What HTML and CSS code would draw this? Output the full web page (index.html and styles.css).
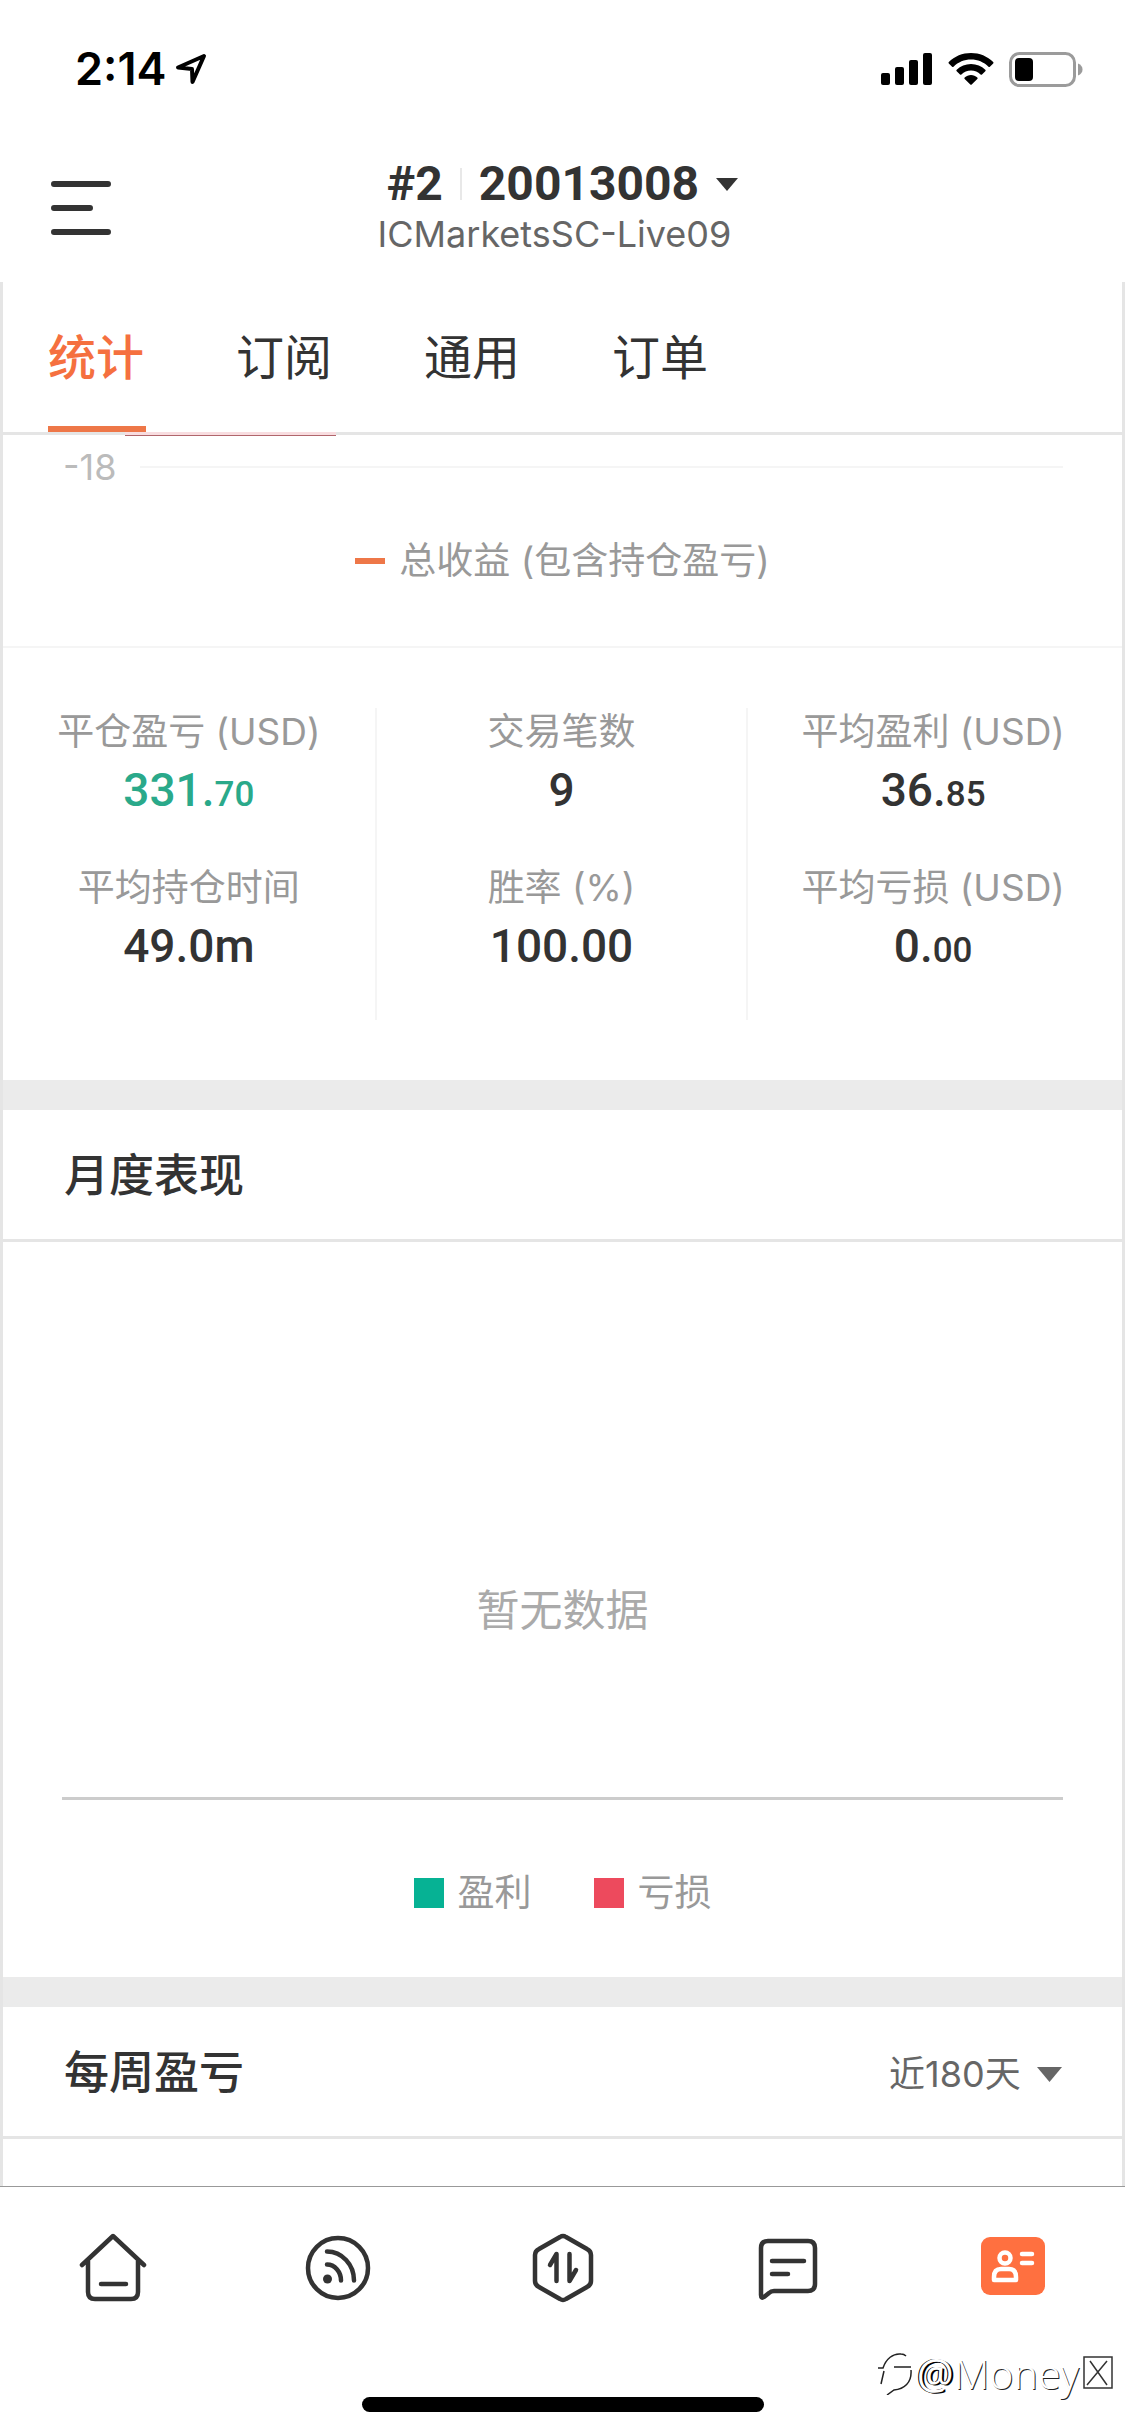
FILE: index.html
```html
<!DOCTYPE html>
<html lang="zh-CN">
<head>
<meta charset="utf-8">
<meta name="viewport" content="width=device-width, initial-scale=1">
<title>20013008</title>
<link rel="stylesheet" href="styles.css">
</head>
<body>
<div class="app">
  <div class="status">
    <div class="status-left">
      <span class="time">2:14</span>
      <svg width="34" height="34" viewBox="0 0 34 34" fill="none" stroke="#000" stroke-width="4" stroke-linejoin="round"><path d="M30 4 4 15.500l14 1.500L18.500 30z"/></svg>
    </div>
    <div class="status-right">
      <svg width="52" height="34" viewBox="0 0 52 34"><rect y="21" width="9" height="12" rx="2"/><rect x="14" y="15" width="9" height="18" rx="2"/><rect x="28" y="8" width="9" height="25" rx="2"/><rect x="42" y="1" width="9" height="32" rx="2"/></svg>
      <svg width="46" height="34" viewBox="0 0 46 34"><path d="M23 1C14.500 1 6.500 4.300.8 10a1 1 0 0 0 0 1.400l3.300 3.300a1 1 0 0 0 1.400 0C10.200 10.200 16.300 7.600 23 7.600s12.800 2.600 17.500 7.100a1 1 0 0 0 1.400 0l3.300-3.300a1 1 0 0 0 0-1.400C39.500 4.300 31.500 1 23 1z"/><path d="M23 12c-5.500 0-10.500 2.100-14.300 5.700a1 1 0 0 0 0 1.500l3.300 3.200a1 1 0 0 0 1.400 0C16 20 19.300 18.600 23 18.600s7 1.400 9.600 3.800a1 1 0 0 0 1.400 0l3.300-3.200a1 1 0 0 0 0-1.500C33.500 14.100 28.500 12 23 12z"/><path d="M23 23c-2.400 0-4.600.9-6.300 2.400a1 1 0 0 0 0 1.500l5.600 5.600a1 1 0 0 0 1.400 0l5.600-5.600a1 1 0 0 0 0-1.500C27.600 23.900 25.400 23 23 23z"/></svg>
      <svg width="74" height="36" viewBox="0 0 74 36"><rect x="1.500" y="2.500" width="64" height="32" rx="9" fill="none" stroke="#9b9b9b" stroke-width="3"/><rect x="6" y="7" width="18" height="23" rx="4"/><path d="M69 12.500c3 1.200 4.500 3.300 4.500 6s-1.500 4.800-4.500 6z" fill="#9b9b9b"/></svg>
    </div>
  </div>

  <header class="header">
    <button class="menu" type="button" aria-label="菜单"><svg width="60" height="56" viewBox="0 0 60 56" stroke="#333" stroke-width="6" stroke-linecap="round"><path d="M3 4h54M3 28h36M3 52h54"/></svg></button>
    <button class="account" type="button">
      <span class="account-line"><span>#2</span><i class="bar"></i><span>20013008</span><svg width="22" height="13" viewBox="0 0 22 13"><path d="M0 0h22L11 13z" fill="#333"/></svg></span>
      <span class="server">ICMarketsSC-Live09</span>
    </button>
  </header>

  <main class="content">
    <nav class="tabs">
      <a class="tab active" href="#stats">统计</a>
      <a class="tab" href="#subscribe">订阅</a>
      <a class="tab" href="#general">通用</a>
      <a class="tab" href="#orders">订单</a>
    </nav>

    <section class="chart-end" id="stats">
      <div class="area-edge"></div>
      <div class="axis"><span>-18</span><i></i></div>
      <div class="legend"><i class="dash"></i>总收益 (包含持仓盈亏)</div>
    </section>

    <section class="stats">
      <div class="col">
        <div class="stat"><span class="label">平仓盈亏 (USD)</span><span class="value gain">331.<small>70</small></span></div>
        <div class="stat"><span class="label">平均持仓时间</span><span class="value">49.0m</span></div>
      </div>
      <div class="col">
        <div class="stat"><span class="label">交易笔数</span><span class="value">9</span></div>
        <div class="stat"><span class="label">胜率 (%)</span><span class="value">100.00</span></div>
      </div>
      <div class="col">
        <div class="stat"><span class="label">平均盈利 (USD)</span><span class="value">36.<small>85</small></span></div>
        <div class="stat"><span class="label">平均亏损 (USD)</span><span class="value">0.<small>00</small></span></div>
      </div>
    </section>

    <section class="panel">
      <div class="panel-head"><h2>月度表现</h2></div>
      <div class="monthly">
        <p class="empty">暂无数据</p>
        <div class="legend keys"><span><i class="key win"></i>盈利</span><span><i class="key loss"></i>亏损</span></div>
      </div>
    </section>

    <section class="panel">
      <div class="panel-head">
        <h2>每周盈亏</h2>
        <label class="range"><select aria-label="时间范围"><option>近180天</option></select><svg width="25" height="15" viewBox="0 0 25 15"><path d="M0 0h25L12.500 15z" fill="#666"/></svg></label>
      </div>
    </section>
  </main>

  <footer class="footer">
    <nav class="dock">
      <a href="#home" aria-label="首页"><svg viewBox="0 0 72 72"><path d="M5 33 36 4l31 29M11 29v31q0 7 7 7h36q7 0 7-7V29M24 52h25"/></svg></a>
      <a href="#feed" aria-label="动态"><svg viewBox="0 0 72 72"><circle cx="36" cy="36" r="30"/><path d="M25 19.500a27 29 0 0 1 27 29M25 32.500a14 16 0 0 1 14 16"/><circle cx="25.500" cy="47" r="4.500" class="solid"/></svg></a>
      <a href="#trade" aria-label="交易"><svg viewBox="0 0 72 72"><path d="M33 5q3-2 6 0l21 12q4 2 4 6v26q0 4-4 6L39 67q-3 2-6 0L12 55q-4-2-4-6V23q0-4 4-6z"/><path d="M23 33l6.500-11v27M42.500 22v27L49 38"/></svg></a>
      <a href="#messages" aria-label="消息"><svg viewBox="0 0 72 72"><path d="M9 63V16q0-7 7-7h40q7 0 7 7v36q0 7-7 7H22q-3 0-5 2l-5 4q-3 2-3-2zM20 29h32M20 42h16"/></svg></a>
      <a href="#account" aria-label="账户"><svg viewBox="0 0 72 72"><rect x="4" y="5" width="64" height="58" rx="9" class="tile"/><g class="person"><circle cx="28" cy="26" r="5.500"/><path d="M17 48v-3q0-8 7-8h8q7 0 7 8v3zM45 22h10M45 31h10"/></g></svg></a>
    </nav>
    <div class="home-bar"></div>
    <div class="watermark"><svg width="36" height="44" viewBox="0 0 36 44" fill="none" stroke="#222" stroke-width="1.500"><path d="M1 17h5C9 8 16 2 24 3c2 0 4 1 5 2M4 33l3-13M17 16h17M34 19c1 13-7 19-17 20l-7 5"/></svg><span><b>@</b>Money</span><svg width="30" height="34" viewBox="0 0 30 34" fill="none" stroke="#333" stroke-width="1.500"><path d="M1 1h28v31H1z"/><path d="M4 29 24 5M7 5l17 24"/></svg></div>
  </footer>
</div>
</body>
</html>
```
FILE: styles.css
```css
* { box-sizing: border-box; }

body {
  margin: 0;
  background: #fff;
  color: #333;
  font-family: Inter, "Noto Sans CJK SC", sans-serif;
  font-size: 36px;
}

button, select {
  padding: 0;
  border: 0;
  background: none;
  color: inherit;
  font: inherit;
  appearance: none;
}

a { color: inherit; text-decoration: none; }
i { display: block; flex: none; }
svg { display: block; flex: none; }

.app { display: flex; flex-direction: column; min-height: 100vh; }

/* Status bar */
.status {
  display: flex;
  justify-content: space-between;
  align-items: center;
  height: 138px;
  padding: 0 42px 0 75px;
  color: #000;
}
.status-left { display: flex; align-items: center; gap: 8px; }
.time { font-size: 45px; font-weight: 600; line-height: 52px; }
.status-right { display: flex; align-items: center; gap: 15px; }

/* Account header */
.header {
  display: grid;
  grid-template-columns: 1fr auto 1fr;
  align-items: center;
  height: 144px;
  padding: 0 51px 4px;
}
.menu { justify-self: start; }
.account { display: flex; flex-direction: column; align-items: center; }
.account-line {
  display: flex;
  align-items: center;
  gap: 17px;
  font: 700 48px/52px Roboto, sans-serif;
}
.bar { width: 2px; height: 32px; background: #e8e8e8; }
.server { padding-right: 16px; color: #666; line-height: 48px; }

/* Scrolled content */
.content {
  flex: 1;
  display: flex;
  flex-direction: column;
  border: solid #e5e5e5;
  border-width: 0 3px;
}
.tabs {
  display: flex;
  gap: 90px;
  height: 153px;
  padding: 0 45px;
  border-bottom: 3px solid #e5e5e5;
  font-size: 48px;
}
.tab {
  width: 98px;
  padding-top: 40px;
  line-height: 72px;
  white-space: nowrap;
}
.tab.active {
  border-bottom: 6px solid #ee7748;
  color: #f5703f;
  font-weight: 500;
}

.chart-end {
  height: 213px;
  border-bottom: 2px solid #f5f5f5;
}
.area-edge {
  width: 211px;
  height: 4px;
  margin: -3px 0 0 122px;
  border-bottom: 1px solid #b0666c;
  background: #f8dde0;
}
.axis {
  display: flex;
  align-items: center;
  gap: 24px;
  padding: 8px 59px 0 60px;
  color: #bbb;
  line-height: 46px;
}
.axis i { flex: 1; height: 2px; background: #f5f5f5; }
.legend {
  display: flex;
  justify-content: center;
  align-items: center;
  gap: 14px;
  padding-top: 45px;
  color: #999;
  font-size: 37px;
  line-height: 52px;
}
.dash { width: 30px; height: 6px; background: #ee7748; }

.stats {
  display: grid;
  grid-template-columns: repeat(3, 1fr);
  height: 432px;
  padding: 60px 4px 60px 0;
}
.col {
  display: flex;
  flex-direction: column;
  gap: 40px;
}
.col + .col { border-left: 2px solid #f5f5f5; }
.stat { display: flex; flex-direction: column; align-items: center; }
.label { color: #999; font-size: 37px; line-height: 48px; white-space: nowrap; }
.value { font: 500 46px/68px Roboto, sans-serif; }
.value small { font-size: 35px; line-height: 1; }
.gain { color: #2aa98a; }

.panel { border-top: 30px solid #ebebeb; }
.panel-head {
  display: flex;
  justify-content: space-between;
  align-items: center;
  height: 132px;
  padding: 2px 60px 0 61px;
  border-bottom: 3px solid #e5e5e5;
}
h2 { margin: 0; font-size: 45px; font-weight: 500; line-height: 60px; }
.range {
  display: flex;
  align-items: center;
  gap: 16px;
  padding-top: 3px;
  color: #666;
}

.monthly { height: 735px; padding: 0 59px; }
.empty {
  display: flex;
  justify-content: center;
  align-items: flex-end;
  height: 558px;
  margin: 0;
  padding-bottom: 155px;
  border-bottom: 3px solid #ccc;
  color: #aaa;
  font-size: 43px;
  line-height: 64px;
}
.keys { gap: 62px; padding-top: 67px; }
.keys span { display: flex; align-items: center; gap: 14px; }
.key { width: 30px; height: 30px; }
.win { background: #06b294; }
.loss { background: #ed4a5d; }

/* Bottom navigation */
.footer {
  position: relative;
  height: 250px;
  border-top: 1px solid #999;
  background: #fff;
}
.dock {
  display: grid;
  grid-template-columns: repeat(5, 1fr);
  justify-items: center;
  padding-top: 45px;
}
.dock svg {
  width: 72px;
  height: 72px;
  fill: none;
  stroke: #333;
  stroke-width: 4.500;
  stroke-linecap: round;
  stroke-linejoin: round;
}
.dock .solid { fill: #333; stroke: none; }
.dock .tile { fill: #ff7040; stroke: none; }
.dock .person { stroke: #fff; }
.home-bar {
  width: 402px;
  height: 15px;
  margin: 93px auto 0;
  border-radius: 8px;
  background: #000;
}
.watermark {
  position: absolute;
  right: 12px;
  bottom: 37px;
  display: flex;
  align-items: center;
  gap: 4px;
  color: #fff;
  font: 300 41px/52px "Noto Sans", sans-serif;
  text-shadow: 1px 1px 0 #222;
}
.watermark b { font-weight: 400; text-shadow: 2px 1px 0 #000, -1px 0 0 #000; }
```
